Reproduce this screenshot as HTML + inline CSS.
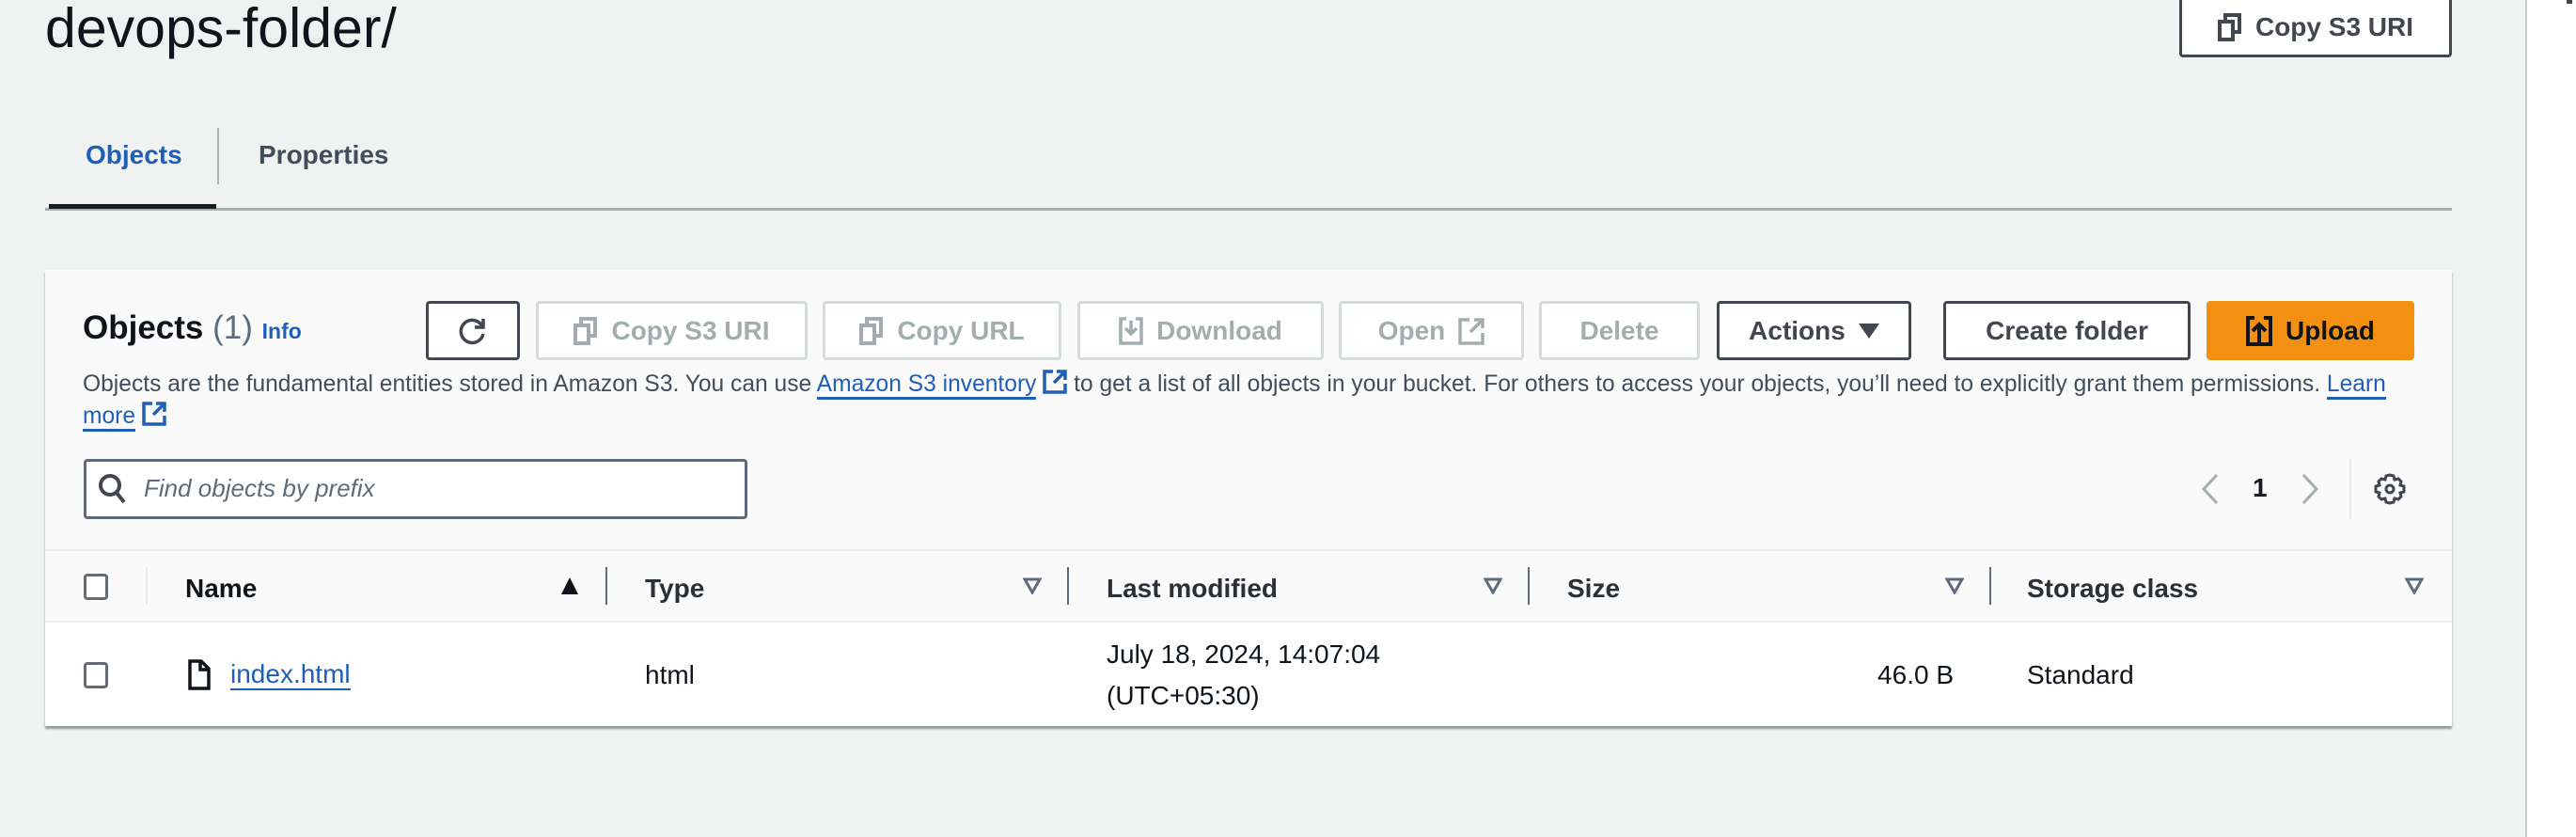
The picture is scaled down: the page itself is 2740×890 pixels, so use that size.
<!DOCTYPE html>
<html><head><meta charset="utf-8"><style>
*{box-sizing:border-box;margin:0;padding:0}
body{width:2740px;height:890px;background:#f0f1f1;font-family:"Liberation Sans",sans-serif;color:#16191f;position:relative;overflow:hidden}
.a{position:absolute}
.btn{position:absolute;top:320px;height:63px;border:3px solid #424650;border-radius:4px;background:#fff;font-weight:bold;font-size:28px;color:#424650;display:flex;align-items:center;justify-content:center;gap:14px}
.dis{border:3px solid #d5dbdb;color:#a3adad}
.th{position:absolute;top:610px;font-size:28px;font-weight:bold;color:#2b3036}
.vd{position:absolute;top:603px;width:2px;height:40px;background:#5f6b7a}
.tri{position:absolute;top:614px}
.cb{position:absolute;width:26px;height:28px;border:3px solid #656b73;border-radius:4px;background:#fff}
a{color:#1f5fb8;text-decoration:none;border-bottom:3px solid #1f5fb8}
.ext{display:inline-block;vertical-align:-4px}
</style></head><body>
<div class="a" style="left:48px;top:-4px;font-size:59px;color:#0f141a">devops-folder/</div>
<div class="btn" style="top:-4px;left:2318px;width:290px;height:65px;">
<svg width="26" height="30" viewBox="0 0 26 30"><rect x="8" y="2" width="15" height="18" fill="none" stroke="#424650" stroke-width="4"/><rect x="2" y="9" width="14" height="19" fill="#fff" stroke="#424650" stroke-width="4"/></svg>Copy S3 URI</div>
<div class="a" style="left:91px;top:149px;font-size:28px;font-weight:bold;color:#1f5fb8">Objects</div>
<div class="a" style="left:231px;top:136px;width:2px;height:60px;background:#aab4b4"></div>
<div class="a" style="left:275px;top:149px;font-size:28px;font-weight:bold;color:#414d5c">Properties</div>
<div class="a" style="left:48px;top:221px;width:2560px;height:3px;background:#a3aeae"></div>
<div class="a" style="left:52px;top:217px;width:178px;height:5px;background:#16191f"></div>
<div class="a" style="left:48px;top:287px;width:2560px;height:485px;background:#fafafa;box-shadow:0 3px 2px #8f9a9a"></div>
<div class="a" style="left:48px;top:662px;width:2560px;height:110px;background:#fff"></div>
<div class="a" style="left:48px;top:584px;width:2560px;height:2px;background:#e9ebed"></div>
<div class="a" style="left:48px;top:660px;width:2560px;height:2px;background:#e9ebed"></div>
<div class="a" style="left:88px;top:329px;font-size:35px;font-weight:bold;color:#0f141a">Objects <span style="font-weight:normal;color:#5f6b7a">(1)</span> <span style="font-size:23px;color:#1f5fb8">Info</span></div>
<div class="btn" style="left:453px;width:100px"><svg width="34" height="34" viewBox="0 0 34 34"><path d="M27 12A12 12 0 1 0 28 20" fill="none" stroke="#424650" stroke-width="3.5"/><path d="M28 4v9h-9" fill="none" stroke="#424650" stroke-width="3.5"/></svg></div>
<div class="btn dis" style="left:570px;width:289px"><svg width="26" height="30" viewBox="0 0 26 30"><rect x="8" y="2" width="15" height="18" fill="none" stroke="#a3adad" stroke-width="4"/><rect x="2" y="9" width="14" height="19" fill="#fff" stroke="#a3adad" stroke-width="4"/></svg>Copy S3 URI</div>
<div class="btn dis" style="left:875px;width:254px"><svg width="26" height="30" viewBox="0 0 26 30"><rect x="8" y="2" width="15" height="18" fill="none" stroke="#a3adad" stroke-width="4"/><rect x="2" y="9" width="14" height="19" fill="#fff" stroke="#a3adad" stroke-width="4"/></svg>Copy URL</div>
<div class="btn dis" style="left:1146px;width:262px"><svg width="26" height="30" viewBox="0 0 26 30"><path d="M8 2H2v26h22V2h-6M13 4v14M7 12l6 6 6-6" fill="none" stroke="#a3adad" stroke-width="3.5"/></svg>Download</div>
<div class="btn dis" style="left:1424px;width:197px">Open <svg width="28" height="30" viewBox="0 0 28 30"><path d="M12 3H2v25h24V17M17 3h9v9M26 3L13 16" fill="none" stroke="#a3adad" stroke-width="3.5"/></svg></div>
<div class="btn dis" style="left:1637px;width:171px">Delete</div>
<div class="btn" style="left:1826px;width:207px">Actions <svg width="22" height="18"><path d="M0 1h22L11 17z" fill="#424650"/></svg></div>
<div class="btn" style="left:2067px;width:263px">Create folder</div>
<div class="btn" style="left:2347px;width:221px;background:#f39012;border-color:#f39012;color:#0f141a"><svg width="28" height="32" viewBox="0 0 28 32"><path d="M9 2H2v28h24V2h-7M14 28V10M7 16l7-7 7 7" fill="none" stroke="#0f141a" stroke-width="4"/></svg>Upload</div>
<div class="a" style="left:88px;top:392px;font-size:24.6px;color:#414d5c;white-space:nowrap;line-height:34px">Objects are the fundamental entities stored in Amazon S3. You can use <a>Amazon S3 inventory</a> <svg class="ext" width="26" height="28" viewBox="0 0 26 28"><path d="M11 3H2v22h22V16M15 3h9v9M24 3L12 15" fill="none" stroke="#1f5fb8" stroke-width="3.5"/></svg> to get a list of all objects in your bucket. For others to access your objects, you’ll need to explicitly grant them permissions. <a>Learn</a><br><a>more</a> <svg class="ext" width="26" height="28" viewBox="0 0 26 28"><path d="M11 3H2v22h22V16M15 3h9v9M24 3L12 15" fill="none" stroke="#1f5fb8" stroke-width="3.5"/></svg></div>
<div class="a" style="left:89px;top:488px;width:706px;height:64px;border:3px solid #5f6b7a;border-radius:4px;background:#fff"></div>
<svg class="a" style="left:104px;top:502px" width="32" height="36" viewBox="0 0 32 36"><circle cx="13" cy="14" r="10" fill="none" stroke="#424650" stroke-width="4"/><path d="M20 22l8 10" stroke="#424650" stroke-width="4"/></svg>
<div class="a" style="left:153px;top:504px;font-size:26px;font-style:italic;color:#5f6b7a">Find objects by prefix</div>
<svg class="a" style="left:2336px;top:502px" width="28" height="36"><path d="M22 3L8 18l14 15" fill="none" stroke="#a3adad" stroke-width="3"/></svg>
<div class="a" style="left:2396px;top:503px;font-size:28px;font-weight:bold;color:#16191f">1</div>
<svg class="a" style="left:2444px;top:502px" width="28" height="36"><path d="M6 3l14 15-14 15" fill="none" stroke="#a3adad" stroke-width="3"/></svg>
<div class="a" style="left:2499px;top:488px;width:2px;height:64px;background:#e9ebed"></div>
<svg class="a" style="left:2524px;top:502px" width="36" height="36" viewBox="0 0 36 36"><path d="M18 3l4 1 1 4 4-1 3 3-1 4 4 1v6l-4 1 1 4-3 3-4-1-1 4-4 1-4-1-1-4-4 1-3-3 1-4-4-1v-6l4-1-1-4 3-3 4 1 1-4z" fill="none" stroke="#424650" stroke-width="3"/><circle cx="18" cy="18" r="4" fill="none" stroke="#424650" stroke-width="3"/></svg>
<div class="cb" style="left:89px;top:610px"></div>
<div class="a" style="left:155px;top:603px;width:2px;height:40px;background:#e9ebed"></div>
<div class="th" style="left:197px;color:#0f141a">Name</div>
<svg class="tri" style="left:596px;top:613px" width="20" height="20"><path d="M10 1L19 19H1z" fill="#0f141a"/></svg>
<div class="vd" style="left:644px"></div>
<div class="th" style="left:686px">Type</div>
<svg class="tri" style="left:1088px" width="20" height="18"><path d="M2 2h16L10 16z" fill="none" stroke="#5f6b7a" stroke-width="3"/></svg>
<div class="vd" style="left:1135px"></div>
<div class="th" style="left:1177px">Last modified</div>
<svg class="tri" style="left:1578px" width="20" height="18"><path d="M2 2h16L10 16z" fill="none" stroke="#5f6b7a" stroke-width="3"/></svg>
<div class="vd" style="left:1625px"></div>
<div class="th" style="left:1667px">Size</div>
<svg class="tri" style="left:2069px" width="20" height="18"><path d="M2 2h16L10 16z" fill="none" stroke="#5f6b7a" stroke-width="3"/></svg>
<div class="vd" style="left:2116px"></div>
<div class="th" style="left:2156px">Storage class</div>
<svg class="tri" style="left:2558px" width="20" height="18"><path d="M2 2h16L10 16z" fill="none" stroke="#5f6b7a" stroke-width="3"/></svg>
<div class="cb" style="left:89px;top:704px"></div>
<svg class="a" style="left:200px;top:701px" width="24" height="33" viewBox="0 0 24 33"><path d="M2 2h12l8 8v21H2z M13 2v9h9" fill="none" stroke="#0f141a" stroke-width="3.5"/></svg>
<div class="a" style="left:245px;top:702px;font-size:28px;line-height:30px"><a style="border-bottom-width:2px">index.html</a></div>
<div class="a" style="left:686px;top:702px;font-size:28px;color:#0f141a">html</div>
<div class="a" style="left:1177px;top:674px;font-size:28px;line-height:44px;color:#0f141a">July 18, 2024, 14:07:04<br>(UTC+05:30)</div>
<div class="a" style="left:1900px;width:178px;text-align:right;top:702px;font-size:28px;color:#0f141a">46.0 B</div>
<div class="a" style="left:2156px;top:702px;font-size:28px;color:#0f141a">Standard</div>
<div class="a" style="left:2686px;top:0;width:2px;height:890px;background:#c6cccc"></div>
<div class="a" style="left:2688px;top:0;width:52px;height:890px;background:#fff"></div>
<div class="a" style="left:2730px;top:0;width:6px;height:4px;background:#424650"></div>
</body></html>
